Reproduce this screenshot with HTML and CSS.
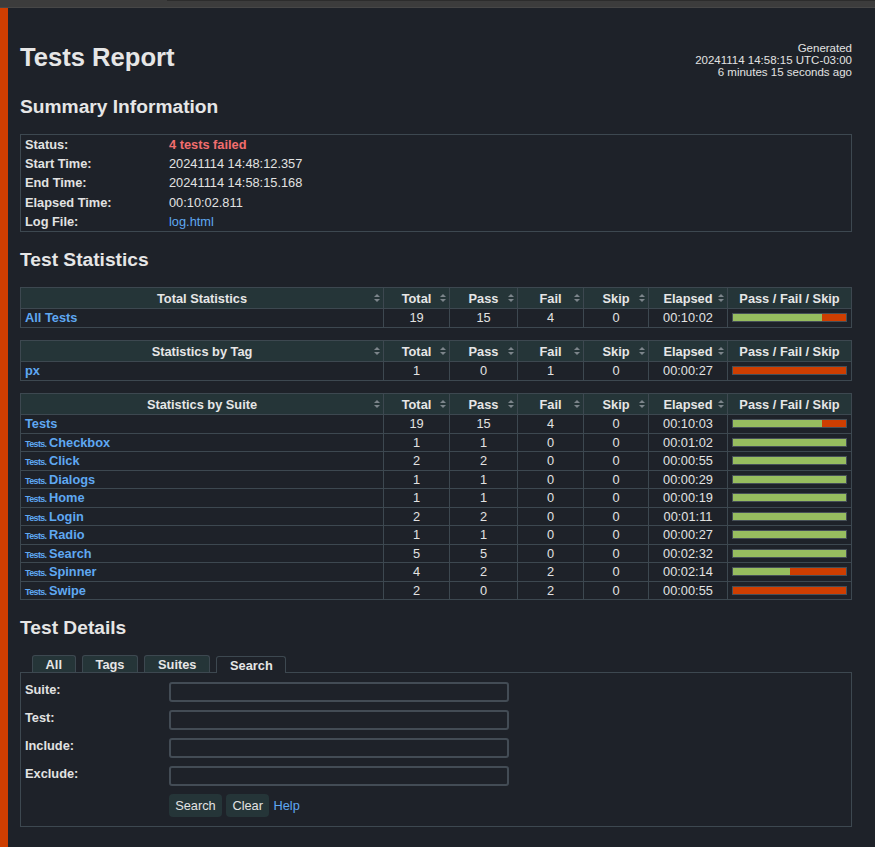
FILE: index.html
```html
<!DOCTYPE html>
<html lang="en">
<head>
<meta charset="utf-8">
<title>Tests Report</title>
<link rel="stylesheet" href="styles.css">
</head>
<body>
<div class="chrome"><div class="chrome-line"></div></div>
<div class="page">
  <header class="top">
    <h1 class="title">Tests Report</h1>
    <div class="generated">Generated<br>20241114 14:58:15 UTC-03:00<br>6 minutes 15 seconds ago</div>
  </header>

  <h2 class="h2 h-summary">Summary Information</h2>
  <table class="summary">
    <colgroup><col class="sum-label"><col></colgroup>
    <tr><th>Status:</th><td class="fail-text">4 tests failed</td></tr>
    <tr><th>Start Time:</th><td>20241114 14:48:12.357</td></tr>
    <tr><th>End Time:</th><td>20241114 14:58:15.168</td></tr>
    <tr><th>Elapsed Time:</th><td>00:10:02.811</td></tr>
    <tr><th>Log File:</th><td><a class="link" href="#">log.html</a></td></tr>
  </table>

  <h2 class="h2 h-stats">Test Statistics</h2>

  <table class="stats first">
    <colgroup><col class="c-name"><col class="c-total"><col class="c-pass"><col class="c-fail"><col class="c-skip"><col class="c-elapsed"><col></colgroup>
    <thead><tr><th class="sort">Total Statistics</th><th class="sort">Total</th><th class="sort">Pass</th><th class="sort">Fail</th><th class="sort">Skip</th><th class="sort">Elapsed</th><th>Pass / Fail / Skip</th></tr></thead>
    <tbody>
      <tr><td class="name"><a class="link" href="#">All Tests</a></td><td>19</td><td>15</td><td>4</td><td>0</td><td>00:10:02</td><td class="graph"><div class="bar"><div class="pass" style="width:78.95%"></div><div class="fail" style="width:21.05%"></div></div></td></tr>
    </tbody>
  </table>

  <table class="stats">
    <colgroup><col class="c-name"><col class="c-total"><col class="c-pass"><col class="c-fail"><col class="c-skip"><col class="c-elapsed"><col></colgroup>
    <thead><tr><th class="sort">Statistics by Tag</th><th class="sort">Total</th><th class="sort">Pass</th><th class="sort">Fail</th><th class="sort">Skip</th><th class="sort">Elapsed</th><th>Pass / Fail / Skip</th></tr></thead>
    <tbody>
      <tr><td class="name"><a class="link" href="#">px</a></td><td>1</td><td>0</td><td>1</td><td>0</td><td>00:00:27</td><td class="graph"><div class="bar"><div class="fail" style="width:100%"></div></div></td></tr>
    </tbody>
  </table>

  <table class="stats">
    <colgroup><col class="c-name"><col class="c-total"><col class="c-pass"><col class="c-fail"><col class="c-skip"><col class="c-elapsed"><col></colgroup>
    <thead><tr><th class="sort">Statistics by Suite</th><th class="sort">Total</th><th class="sort">Pass</th><th class="sort">Fail</th><th class="sort">Skip</th><th class="sort">Elapsed</th><th>Pass / Fail / Skip</th></tr></thead>
    <tbody>
      <tr><td class="name"><a class="link" href="#">Tests</a></td><td>19</td><td>15</td><td>4</td><td>0</td><td>00:10:03</td><td class="graph"><div class="bar"><div class="pass" style="width:78.95%"></div><div class="fail" style="width:21.05%"></div></div></td></tr>
      <tr><td class="name"><a class="link" href="#"><span class="parent">Tests.</span>Checkbox</a></td><td>1</td><td>1</td><td>0</td><td>0</td><td>00:01:02</td><td class="graph"><div class="bar"><div class="pass" style="width:100%"></div></div></td></tr>
      <tr><td class="name"><a class="link" href="#"><span class="parent">Tests.</span>Click</a></td><td>2</td><td>2</td><td>0</td><td>0</td><td>00:00:55</td><td class="graph"><div class="bar"><div class="pass" style="width:100%"></div></div></td></tr>
      <tr><td class="name"><a class="link" href="#"><span class="parent">Tests.</span>Dialogs</a></td><td>1</td><td>1</td><td>0</td><td>0</td><td>00:00:29</td><td class="graph"><div class="bar"><div class="pass" style="width:100%"></div></div></td></tr>
      <tr><td class="name"><a class="link" href="#"><span class="parent">Tests.</span>Home</a></td><td>1</td><td>1</td><td>0</td><td>0</td><td>00:00:19</td><td class="graph"><div class="bar"><div class="pass" style="width:100%"></div></div></td></tr>
      <tr><td class="name"><a class="link" href="#"><span class="parent">Tests.</span>Login</a></td><td>2</td><td>2</td><td>0</td><td>0</td><td>00:01:11</td><td class="graph"><div class="bar"><div class="pass" style="width:100%"></div></div></td></tr>
      <tr><td class="name"><a class="link" href="#"><span class="parent">Tests.</span>Radio</a></td><td>1</td><td>1</td><td>0</td><td>0</td><td>00:00:27</td><td class="graph"><div class="bar"><div class="pass" style="width:100%"></div></div></td></tr>
      <tr><td class="name"><a class="link" href="#"><span class="parent">Tests.</span>Search</a></td><td>5</td><td>5</td><td>0</td><td>0</td><td>00:02:32</td><td class="graph"><div class="bar"><div class="pass" style="width:100%"></div></div></td></tr>
      <tr><td class="name"><a class="link" href="#"><span class="parent">Tests.</span>Spinner</a></td><td>4</td><td>2</td><td>2</td><td>0</td><td>00:02:14</td><td class="graph"><div class="bar"><div class="pass" style="width:50%"></div><div class="fail" style="width:50%"></div></div></td></tr>
      <tr><td class="name"><a class="link" href="#"><span class="parent">Tests.</span>Swipe</a></td><td>2</td><td>0</td><td>2</td><td>0</td><td>00:00:55</td><td class="graph"><div class="bar"><div class="fail" style="width:100%"></div></div></td></tr>
    </tbody>
  </table>

  <h2 class="h2 h-details">Test Details</h2>
  <div class="tabs">
    <div class="tab">All</div>
    <div class="tab">Tags</div>
    <div class="tab">Suites</div>
    <div class="tab sel">Search</div>
  </div>
  <div class="search-box">
    <div class="srow"><label class="slabel">Suite:</label><input class="sinput" type="text"></div>
    <div class="srow"><label class="slabel">Test:</label><input class="sinput" type="text"></div>
    <div class="srow"><label class="slabel">Include:</label><input class="sinput" type="text"></div>
    <div class="srow"><label class="slabel">Exclude:</label><input class="sinput" type="text"></div>
    <div class="sbuttons">
      <button class="btn" type="button">Search</button>
      <button class="btn" type="button">Clear</button>
      <a class="link help" href="#">Help</a>
    </div>
  </div>
</div>
</body>
</html>
```

FILE: styles.css
```css
* { box-sizing: border-box; }
html, body {
  margin: 0;
  padding: 0;
  background: #1e2229;
}
body {
  font-family: "Liberation Sans", Arial, Helvetica, sans-serif;
  font-size: 12.8px;
  line-height: 15px;
  color: #e2e2e2;
}
.chrome {
  height: 8px;
  background: #3c3c3c;
  border-bottom: 1px solid #474747;
}
.chrome-line {
  height: 1px;
  margin-left: 167px;
  background: #2c2c2c;
}
.page {
  border-left: 8px solid #ce3e01;
  padding: 0 23px 0 12px;
  min-height: 839px;
}
.top {
  display: flex;
  justify-content: space-between;
  align-items: flex-start;
  padding-top: 33.5px;
}
.title {
  margin: 0;
  font-size: 25.6px;
  line-height: 30px;
  font-weight: bold;
  color: #e6e6e6;
}
.generated {
  font-size: 11.5px;
  line-height: 12.4px;
  text-align: right;
  color: #e2e2e2;
}
.h2 {
  margin: 0;
  font-size: 19.2px;
  line-height: 22px;
  font-weight: bold;
  color: #e6e6e6;
}
.h-summary { margin-top: 17.3px; }
.h-stats { margin-top: 17px; }
.h-details { margin-top: 17px; }

.link {
  color: #5fa8f2;
  text-decoration: none;
}
.fail-text {
  color: #f26e6e;
  font-weight: bold;
}

/* summary */
.summary {
  width: 100%;
  margin-top: 16px;
  border: 1px solid #3d4850;
  border-collapse: separate;
  border-spacing: 0;
  table-layout: fixed;
}
.sum-label { width: 144px; }
.summary th, .summary td {
  padding: 2px 4px;
  line-height: 15.2px;
  text-align: left;
  vertical-align: top;
}
.summary th { font-weight: bold; }

/* stats */
.stats {
  width: 100%;
  border-collapse: collapse;
  table-layout: fixed;
  margin-top: 12.5px;
}
.stats.first { margin-top: 16px; }
.c-name { width: 363px; }
.c-total { width: 66px; }
.c-pass { width: 68px; }
.c-fail { width: 66px; }
.c-skip { width: 65px; }
.c-elapsed { width: 79px; }
.stats th, .stats td {
  border: 1px solid #3d4850;
  text-align: center;
  white-space: nowrap;
}
.stats th {
  background: #253538;
  font-weight: bold;
  padding: 3px 4px 2px;
  line-height: 15px;
  color: #e6e6e6;
}
.stats th.sort { position: relative; }
.stats th.sort::before,
.stats th.sort::after {
  content: "";
  position: absolute;
  right: 3px;
  width: 0;
  height: 0;
  border-left: 3.5px solid transparent;
  border-right: 3.5px solid transparent;
}
.stats th.sort::before {
  top: 6px;
  border-bottom: 3.5px solid #7d858b;
}
.stats th.sort::after {
  top: 11px;
  border-top: 3.5px solid #7d858b;
}
.stats td {
  height: 18.5px;
  padding: 1px 4px 0;
  line-height: 15px;
  vertical-align: top;
}
.stats td.name {
  text-align: left;
  font-weight: bold;
}
.parent {
  font-size: 0.7em;
  line-height: 1;
  letter-spacing: -0.07em;
  margin-right: 2.5px;
}
.stats td.graph {
  padding: 4px 4px 0;
}
.bar {
  display: flex;
  height: 9px;
  border: 1px solid #464f57;
  background: #1e2229;
}
.bar .pass { background: #97bd5f; }
.bar .fail { background: #ce3e01; }

/* details */
.tabs {
  display: flex;
  align-items: flex-end;
  gap: 6.4px;
  height: 17px;
  margin-top: 16.4px;
  padding-left: 12px;
}
.tab {
  height: 17px;
  padding: 0.5px 12.6px 0;
  border: 1px solid #3d4850;
  border-bottom: none;
  border-radius: 3px 3px 0 0;
  background: #253538;
  font-weight: bold;
  line-height: 15px;
  color: #e6e6e6;
}
.tab.sel {
  position: relative;
  z-index: 1;
  height: 17.5px;
  padding-top: 1.5px;
  margin-bottom: -1px;
  background: #1e2229;
}
.search-box {
  border: 1px solid #3d4850;
  padding: 9px 4px 9px;
  display: flex;
  flex-direction: column;
  gap: 8px;
}
.srow {
  display: flex;
  align-items: flex-start;
  height: 20px;
}
.slabel {
  width: 144px;
  font-weight: bold;
  line-height: 15px;
}
.sinput {
  width: 340px;
  height: 20px;
  margin: 0;
  padding: 0 3px;
  border: 2px solid #434c55;
  border-radius: 3px;
  background: #1e2229;
  color: #e2e2e2;
  font: inherit;
}
.sbuttons {
  display: flex;
  align-items: flex-start;
  gap: 4.3px;
  padding-left: 144px;
}
.btn {
  margin: 0;
  padding: 4px 6.2px;
  border: none;
  border-radius: 4px;
  background: #253538;
  color: #e2e2e2;
  font-family: inherit;
  font-size: 12.8px;
  line-height: 15px;
}
.help {
  padding-top: 4px;
  line-height: 15px;
}
```
